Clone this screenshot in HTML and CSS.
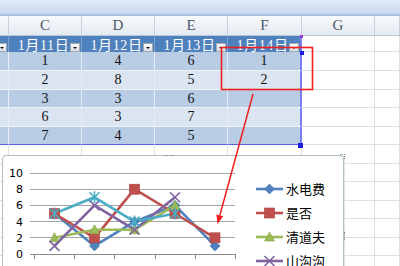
FILE: index.html
```html
<!DOCTYPE html>
<html lang="zh-CN">
<head>
  <meta charset="UTF-8">
  <title>表格与图表</title>
  <link rel="stylesheet" href="styles.css">
</head>
<body>

  <div class="topbar"></div>

  <div class="sheet">
    <!-- column letters -->
    <div class="row colhead">
      <div class="c"></div><div class="c">C</div><div class="c">D</div><div class="c">E</div><div class="c">F</div><div class="c">G</div><div class="c"></div>
    </div>

    <!-- table header -->
    <div class="row thead">
      <div class="c t"><span class="dd"></span></div>
      <div class="c t"><span class="lbl">1月11日</span><span class="dd"></span></div>
      <div class="c t"><span class="lbl">1月12日</span><span class="dd"></span></div>
      <div class="c t"><span class="lbl">1月13日</span><span class="dd"></span></div>
      <div class="c t edge"><span class="lbl">1月14日</span><span class="dd"></span></div>
      <div class="c g"></div><div class="c g"></div>
    </div>

    <div class="row r19 dark">
      <div class="c t"></div><div class="c t">1</div><div class="c t">4</div><div class="c t">6</div><div class="c t edge">1</div><div class="c g"></div><div class="c g"></div>
    </div>
    <div class="row r19 light">
      <div class="c t"></div><div class="c t">2</div><div class="c t">8</div><div class="c t">5</div><div class="c t edge">2</div><div class="c g"></div><div class="c g"></div>
    </div>
    <div class="row r18 dark">
      <div class="c t"></div><div class="c t">3</div><div class="c t">3</div><div class="c t">6</div><div class="c t edge"></div><div class="c g"></div><div class="c g"></div>
    </div>
    <div class="row r19 light">
      <div class="c t"></div><div class="c t">6</div><div class="c t">3</div><div class="c t">7</div><div class="c t edge"></div><div class="c g"></div><div class="c g"></div>
    </div>
    <div class="row r18 dark last">
      <div class="c t"></div><div class="c t">7</div><div class="c t">4</div><div class="c t">5</div><div class="c t edge"></div><div class="c g"></div><div class="c g"></div>
    </div>

    <!-- empty grid below the table -->
    <div class="row r19 blank"><div class="c g"></div><div class="c g"></div><div class="c g"></div><div class="c g"></div><div class="c g"></div><div class="c g"></div><div class="c g"></div></div>
    <div class="row r18 blank"><div class="c g"></div><div class="c g"></div><div class="c g"></div><div class="c g"></div><div class="c g"></div><div class="c g"></div><div class="c g"></div></div>
    <div class="row r19 blank"><div class="c g"></div><div class="c g"></div><div class="c g"></div><div class="c g"></div><div class="c g"></div><div class="c g"></div><div class="c g"></div></div>
    <div class="row r18 blank"><div class="c g"></div><div class="c g"></div><div class="c g"></div><div class="c g"></div><div class="c g"></div><div class="c g"></div><div class="c g"></div></div>
    <div class="row r19 blank"><div class="c g"></div><div class="c g"></div><div class="c g"></div><div class="c g"></div><div class="c g"></div><div class="c g"></div><div class="c g"></div></div>
    <div class="row r18 blank"><div class="c g"></div><div class="c g"></div><div class="c g"></div><div class="c g"></div><div class="c g"></div><div class="c g"></div><div class="c g"></div></div>
    <div class="row r19 blank"><div class="c g"></div><div class="c g"></div><div class="c g"></div><div class="c g"></div><div class="c g"></div><div class="c g"></div><div class="c g"></div></div>
  </div>

  <!-- selection handles of the table -->
  <span class="hdl hdl-top"></span>
  <span class="hdl hdl-head"></span>
  <span class="hdl hdl-end"></span>

  <!-- embedded line chart -->
  <div class="chart">
    <span class="grip grip-top"></span>
    <span class="grip grip-corner"></span>
    <span class="grip grip-side"></span>
    <svg width="340" height="120" viewBox="3 156 340 120">
      <defs>
        <path id="m-dia" d="M0,-5 L5,0 L0,5 L-5,0Z" fill="#4f81bd" stroke="#3c6da8" stroke-width="0.6"/>
        <rect id="m-sq" x="-5" y="-5" width="10" height="10" fill="#c0504d" stroke="#a8403d" stroke-width="0.6"/>
        <path id="m-tri" d="M0,-5 L5,4 L-5,4Z" fill="#9bbb59" stroke="#86a648" stroke-width="0.6"/>
        <path id="m-x" d="M-5,-5 L5,5 M-5,5 L5,-5" stroke="#8064a2" stroke-width="1.6" fill="none"/>
        <path id="m-star" d="M-5,-5 L5,5 M-5,5 L5,-5 M0,-6 L0,6" stroke="#4bacc6" stroke-width="1.6" fill="none"/>
      </defs>

      <!-- grid -->
      <g stroke="#a5a5a5" stroke-width="1">
        <line x1="30" y1="173.5" x2="235" y2="173.5"/>
        <line x1="30" y1="189.5" x2="235" y2="189.5"/>
        <line x1="30" y1="205.5" x2="235" y2="205.5"/>
        <line x1="30" y1="221.5" x2="235" y2="221.5"/>
        <line x1="30" y1="237.5" x2="235" y2="237.5"/>
      </g>
      <g stroke="#8a8a8a" stroke-width="1">
        <line x1="30" y1="254.5" x2="235" y2="254.5"/>
        <line x1="34.5" y1="254" x2="34.5" y2="259"/>
        <line x1="74.5" y1="254" x2="74.5" y2="259"/>
        <line x1="114.5" y1="254" x2="114.5" y2="259"/>
        <line x1="155.5" y1="254" x2="155.5" y2="259"/>
        <line x1="195.5" y1="254" x2="195.5" y2="259"/>
        <line x1="235.5" y1="254" x2="235.5" y2="259"/>
      </g>
      <g class="axis" text-anchor="end">
        <text x="23" y="177">10</text>
        <text x="23" y="193">8</text>
        <text x="23" y="209">6</text>
        <text x="23" y="225.5">4</text>
        <text x="23" y="241.5">2</text>
        <text x="23" y="258">0</text>
      </g>

      <!-- series -->
      <g fill="none" stroke-width="2.6" stroke-linejoin="round">
        <polyline stroke="#4f81bd" points="54.5,213.5 94.5,245.9 134.5,221.6 175,205.4 215,245.9"/>
        <polyline stroke="#c0504d" points="54.5,213.5 94.5,237.8 134.5,189.2 175,213.5 215,237.8"/>
        <polyline stroke="#9bbb59" points="54.5,237.8 94.5,229.7 134.5,229.7 175,205.4"/>
        <polyline stroke="#8064a2" points="54.5,245.9 94.5,205.4 134.5,229.7 175,197.3"/>
        <polyline stroke="#4bacc6" points="54.5,213.5 94.5,197.3 134.5,221.6 175,213.5"/>
      </g>
      <g>
        <use href="#m-dia" x="54.5" y="213.5"/><use href="#m-dia" x="94.5" y="245.9"/><use href="#m-dia" x="134.5" y="221.6"/><use href="#m-dia" x="175" y="205.4"/><use href="#m-dia" x="215" y="245.9"/>
        <use href="#m-sq" x="54.5" y="213.5"/><use href="#m-sq" x="94.5" y="237.8"/><use href="#m-sq" x="134.5" y="189.2"/><use href="#m-sq" x="175" y="213.5"/><use href="#m-sq" x="215" y="237.8"/>
        <use href="#m-tri" x="54.5" y="237.8"/><use href="#m-tri" x="94.5" y="229.7"/><use href="#m-tri" x="134.5" y="229.7"/><use href="#m-tri" x="175" y="205.4"/>
        <use href="#m-x" x="54.5" y="245.9"/><use href="#m-x" x="94.5" y="205.4"/><use href="#m-x" x="134.5" y="229.7"/><use href="#m-x" x="175" y="197.3"/>
        <use href="#m-star" x="54.5" y="213.5"/><use href="#m-star" x="94.5" y="197.3"/><use href="#m-star" x="134.5" y="221.6"/><use href="#m-star" x="175" y="213.5"/>
      </g>

      <!-- legend -->
      <g stroke-width="2.6">
        <line x1="256" y1="189" x2="283" y2="189" stroke="#4f81bd"/>
        <line x1="256" y1="213" x2="283" y2="213" stroke="#c0504d"/>
        <line x1="256" y1="237" x2="283" y2="237" stroke="#9bbb59"/>
        <line x1="256" y1="261" x2="283" y2="261" stroke="#8064a2"/>
      </g>
      <use href="#m-dia" x="269.5" y="189"/>
      <use href="#m-sq" x="269.5" y="213"/>
      <use href="#m-tri" x="269.5" y="237"/>
      <use href="#m-x" x="269.5" y="261"/>
      <g class="legend">
        <text x="286" y="193.5">水电费</text>
        <text x="286" y="217.5">是否</text>
        <text x="286" y="241.5">清道夫</text>
        <text x="286" y="265.5">山沟沟</text>
      </g>
    </svg>
  </div>

  <!-- red annotation drawn over the sheet -->
  <svg class="marks" width="400" height="266" viewBox="0 0 400 266">
    <rect x="221.5" y="47.5" width="91" height="42" fill="none" stroke="#f01e1e" stroke-width="1.6"/>
    <line x1="253" y1="94" x2="219.8" y2="215.5" stroke="#f01e1e" stroke-width="1.5"/>
    <polygon points="217.5,224 223.2,216.2 216.4,214.4" fill="#f01e1e"/>
  </svg>

</body>
</html>
```

FILE: styles.css
```css
body {
  margin: 0;
  width: 400px;
  height: 266px;
  overflow: hidden;
  position: relative;
  background: #fff;
  font-family: "Liberation Serif", "Noto Sans CJK SC", serif;
}

.topbar { /* strip above the column letters */
  height: 14px;
  background: linear-gradient(#dfe9f6, #c9d9ef);
  border-bottom: 2px solid #a9c2e6;
}

.row {
  display: grid;
  grid-template-columns: 9px 73px 73px 73px 74px 73px 1fr;
}

.c {
  box-sizing: border-box;
  display: flex;
  align-items: center;
  justify-content: center;
  font-size: 14px;
  color: #111;
}

/* column letters */
.colhead { height: 20px; }
.colhead .c {
  background: linear-gradient(#f9fbfd, #e4eaf2);
  border-right: 1px solid #c7d0dc;
  border-bottom: 1px solid #b7c7d9;
  color: #4b5868;
  font-size: 15px;
}

/* table header */
.thead { height: 16px; }
.thead .t {
  background: #4f81bd;
  color: #fff;
  border-right: 1px solid #7ea1cf;
  justify-content: flex-end;
  align-items: flex-end;
  font-size: 14px;
  overflow: hidden;
}
.lbl {
  flex: 1;
  text-align: center;
  align-self: center;
  padding-left: 8px;
  letter-spacing: 0.6px;
  white-space: nowrap;
}
.dd { /* filter dropdown button */
  flex: none;
  width: 10px;
  height: 9px;
  margin: 0 1px 0 0;
  box-sizing: border-box;
  background: linear-gradient(#fdfdfd, #d9dce0);
  border: 1px solid #a3a9b2;
  display: flex;
  align-items: center;
  justify-content: center;
}
.dd::after {
  content: "";
  border-left: 2px solid transparent;
  border-right: 2px solid transparent;
  border-top: 2px solid #111;
}

/* data rows */
.r19 { height: 19px; }
.r18 { height: 18px; }
.dark .t { background: #b8cce4; }
.light .t { background: #dbe5f1; }
.dark .t, .light .t {
  border-right: 1px solid #e4ebf5;
  border-bottom: 1px solid #eef3f9;
  font-size: 14px;
}
.last .t { border-bottom: 1px solid #5d5dd8; }

.t.edge { border-right: 2px solid #7b7bf0 !important; }

/* plain grid cells */
.g {
  border-right: 1px solid #dcdfe4;
  border-bottom: 1px solid #dcdfe4;
}

/* selection handles */
.hdl {
  position: absolute;
  display: block;
}
.hdl-top { left: 300px; top: 35px; width: 3px; height: 3px; background: #a43ad8; }
.hdl-head { left: 300px; top: 51px; width: 4px; height: 4px; background: #1c1ce0; }
.hdl-end { left: 298px; top: 143px; width: 5px; height: 5px; background: #1c1ce0; }

/* chart object */
.chart {
  position: absolute;
  left: 2px;
  top: 155px;
  width: 340px;
  height: 120px;
  background: #fff;
  border: 1px solid #aebdc0;
  border-radius: 4px 4px 0 0;
  box-shadow: 1px 0 0 #dfe6e8;
}
.chart svg { display: block; }

.axis text {
  font-family: "DejaVu Sans", sans-serif;
  font-size: 11px;
  fill: #000;
}
.legend text {
  font-family: "Noto Sans CJK SC", sans-serif;
  font-size: 13px;
  fill: #000;
}

.grip { position: absolute; display: block; }
.grip-top { left: 162px; top: -1px; width: 9px; border-top: 1px dotted #7c8a8d; }
.grip-corner { right: -2px; top: -2px; width: 4px; height: 4px; border-top: 1px dotted #7c8a8d; border-right: 1px dotted #7c8a8d; }
.grip-side { right: -2px; top: 76px; height: 8px; border-right: 1px dotted #7c8a8d; }

.marks {
  position: absolute;
  left: 0;
  top: 0;
  pointer-events: none;
}
```
